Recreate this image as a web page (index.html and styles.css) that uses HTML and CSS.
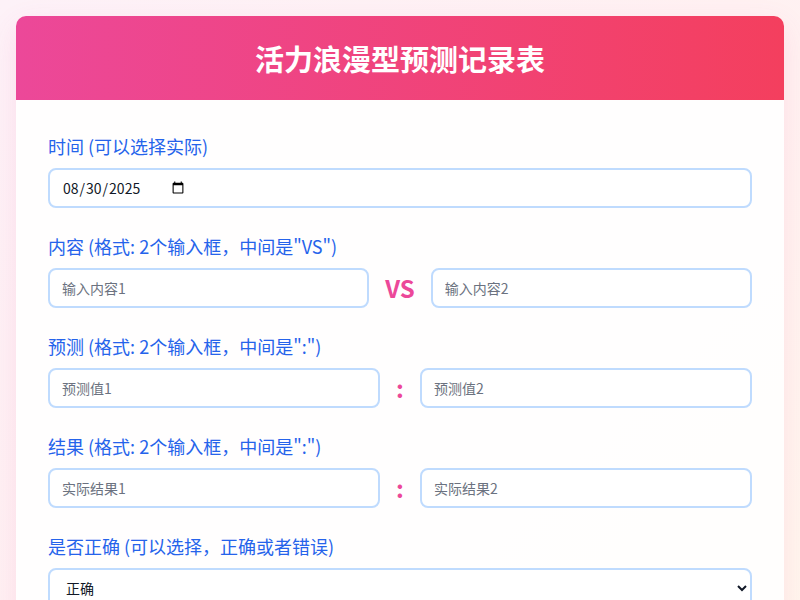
FILE: index.html
```html
<!DOCTYPE html>
<html lang="zh-CN">
<head>
<meta charset="UTF-8">
<title>活力浪漫型预测记录表</title>
<link rel="stylesheet" href="styles.css">
</head>
<body>
<div class="card">
  <div class="card-header">
    <h1 class="title">活力浪漫型预测记录表</h1>
  </div>
  <form class="card-body">
    <div class="group">
      <label class="label">时间 (可以选择实际)</label>
      <input class="field date" type="date" value="2025-08-30">
    </div>
    <div class="group">
      <label class="label">内容 (格式: 2个输入框，中间是"VS")</label>
      <div class="pair">
        <input class="field" type="text" placeholder="输入内容1">
        <span class="sep sep-vs">VS</span>
        <input class="field" type="text" placeholder="输入内容2">
      </div>
    </div>
    <div class="group">
      <label class="label">预测 (格式: 2个输入框，中间是":")</label>
      <div class="pair">
        <input class="field" type="text" placeholder="预测值1">
        <span class="sep sep-colon">:</span>
        <input class="field" type="text" placeholder="预测值2">
      </div>
    </div>
    <div class="group">
      <label class="label">结果 (格式: 2个输入框，中间是":")</label>
      <div class="pair">
        <input class="field" type="text" placeholder="实际结果1">
        <span class="sep sep-colon">:</span>
        <input class="field" type="text" placeholder="实际结果2">
      </div>
    </div>
    <div class="group">
      <label class="label">是否正确 (可以选择，正确或者错误)</label>
      <select class="field select">
        <option>正确</option>
        <option>错误</option>
      </select>
    </div>
  </form>
</div>
</body>
</html>
```

FILE: styles.css
```css
html, body {
  margin: 0;
  padding: 0;
}
body {
  min-height: 100vh;
  padding: 16px;
  box-sizing: border-box;
  background: linear-gradient(135deg, #fdf2f8 0%, #fff1f2 50%, #fff7ed 100%);
  font-family: "Noto Sans CJK SC", "Noto Sans", sans-serif;
}
.card {
  border-radius: 10px;
  overflow: hidden;
  background: rgba(255, 255, 255, 0.88);
  box-shadow: 0 10px 30px rgba(236, 72, 153, 0.12);
}
.card-header {
  background: linear-gradient(90deg, #ec4899 0%, #f43f5e 100%);
  padding: 22px 24px;
  text-align: center;
}
.title {
  margin: 0;
  color: #ffffff;
  font-size: 29px;
  line-height: 40px;
  font-weight: 700;
}
.card-body {
  display: block;
  padding: 32px 32px 24px;
}
.group {
  margin-bottom: 24px;
}
.label {
  display: block;
  color: #2563eb;
  font-size: 18px;
  line-height: 28px;
  margin-bottom: 8px;
}
.field {
  display: block;
  width: 100%;
  height: 40px;
  box-sizing: border-box;
  padding: 0 12px;
  border: 2px solid #bfdbfe;
  border-radius: 8px;
  background: #ffffff;
  font-family: "Noto Sans CJK SC", "Noto Sans", sans-serif;
  font-size: 14px;
  color: #111827;
  outline: none;
}
.field::placeholder {
  color: #6b7280;
}
.date::-webkit-datetime-edit {
  flex: none;
}
.date::-webkit-calendar-picker-indicator {
  margin-left: 0;
}
.select {
  padding: 0 12px;
}
.pair {
  display: flex;
  align-items: center;
  gap: 16px;
}
.pair .field {
  flex: 1;
  min-width: 0;
}
.sep {
  color: #ec4899;
  font-weight: 700;
  font-size: 24px;
  line-height: 40px;
}
.sep-colon {
  font-size: 24px;
}
```
